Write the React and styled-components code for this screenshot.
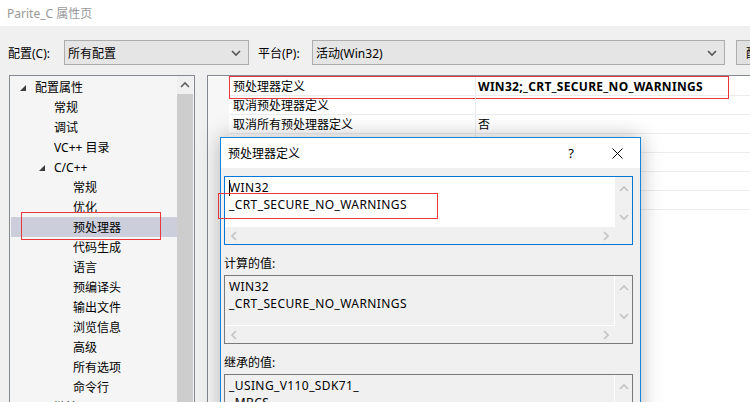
import React from 'react';
import styled, { createGlobalStyle } from 'styled-components';

const GlobalStyle = createGlobalStyle`
  body {
    margin: 0;
    font-family: "Segoe UI", "Noto Sans", "Noto Sans CJK SC", sans-serif;
    font-size: 12px;
    color: #000;
  }
`;

const Window = styled.div`
  position: relative;
  width: 750px;
  height: 402px;
  overflow: hidden;
  background: #f0f0f0;
  display: flex;
  flex-direction: column;
`;

const TitleBar = styled.div`
  height: 26px;
  flex-shrink: 0;
  background: #fff;
  color: #999;
  padding-left: 7px;
  display: flex;
  align-items: center;
`;

const ConfigRow = styled.div`
  display: flex;
  align-items: center;
  height: 25px;
  margin-top: 14px;
  padding-left: 8px;
  flex-shrink: 0;
`;

const FieldLabel = styled.span`
  display: block;
  flex-shrink: 0;
  width: ${p => p.$w}px;
  margin-left: ${p => p.$ml || 0}px;
  white-space: nowrap;
`;

const Latin = styled.span`
  letter-spacing: ${p => (p.$bold ? 0.3 : 0.4)}px;
`;

const Select = styled.div`
  width: ${p => p.$w}px;
  height: 25px;
  box-sizing: border-box;
  border: 1px solid #adadad;
  background: #e5e5e5;
  display: flex;
  align-items: center;
  justify-content: space-between;
  padding: 0 7px 0 3px;
  flex-shrink: 0;
`;

const Button = styled.div`
  margin-left: 11px;
  width: 110px;
  height: 25px;
  box-sizing: border-box;
  border: 1px solid #adadad;
  background: #e1e1e1;
  display: flex;
  align-items: center;
  padding-left: 9px;
  white-space: nowrap;
  flex-shrink: 0;
`;

const Panels = styled.div`
  flex: 1;
  min-height: 0;
  display: flex;
  gap: 12px;
  margin-top: 10px;
  padding-left: 9px;
`;

const Tree = styled.div`
  width: 186px;
  flex-shrink: 0;
  box-sizing: border-box;
  border: 1px solid #828790;
  border-bottom: none;
  background: #f5f5f5;
  display: flex;
  padding-right: 1px;
`;

const TreeList = styled.div`
  flex: 1;
  padding: 1px 0 0 1px;
`;

const TreeRow = styled.div`
  position: relative;
  height: 20px;
  display: flex;
  align-items: center;
  padding-left: ${p => 5 + p.$level * 19}px;
  background: ${p => (p.$selected ? '#cccedb' : 'transparent')};
  white-space: nowrap;
`;

const Caret = styled.span`
  width: 19px;
  flex-shrink: 0;
  display: flex;
  align-items: center;
  padding-left: 4px;
  box-sizing: border-box;
  height: 100%;
  padding-top: 1px;
`;

const VBar = styled.div`
  width: 16px;
  display: flex;
  flex-direction: column;
  background: #f0f0f0;
`;

const BarButton = styled.div`
  height: 18px;
  display: flex;
  align-items: center;
  justify-content: center;
`;

const Thumb = styled.div`
  flex: 1;
  background: #cdcdcd;
`;

const Grid = styled.div`
  flex: 1;
  border-left: 1px solid #828790;
  border-top: 1px solid #828790;
  background: #fff;
  padding-top: 1px;
  display: flex;
  flex-direction: column;
`;

const GridRow = styled.div`
  position: relative;
  display: flex;
  height: 19px;
  flex-shrink: 0;
`;

const Gutter = styled.div`
  width: 21px;
  background: #f7f7f7;
  flex-shrink: 0;
`;

const GridFill = styled.div`
  flex: 1;
  display: flex;
`;

const NameCell = styled.div`
  width: 246px;
  box-sizing: border-box;
  padding-left: 4px;
  border-bottom: 1px solid #ececf0;
  display: flex;
  align-items: center;
  white-space: nowrap;
`;

const ValueCell = styled.div`
  flex: 1;
  box-sizing: border-box;
  padding-left: 2px;
  border-left: 1px solid #ececf0;
  border-bottom: 1px solid #ececf0;
  display: flex;
  align-items: center;
  white-space: nowrap;
  font-weight: ${p => (p.$bold ? 700 : 400)};
`;

const Mark = styled.div`
  position: absolute;
  left: ${p => p.$l}px;
  top: ${p => p.$t}px;
  width: ${p => p.$w}px;
  height: ${p => p.$h}px;
  box-sizing: border-box;
  border: 1px solid #e8383d;
  pointer-events: none;
`;

const Dialog = styled.div`
  position: absolute;
  left: 220px;
  top: 137px;
  width: 421px;
  height: 290px;
  box-sizing: border-box;
  border: 1px solid #1883d7;
  background: #f0f0f0;
  box-shadow: 0 0 20px rgba(0, 0, 0, 0.28);
  display: flex;
  flex-direction: column;
`;

const DialogTitle = styled.div`
  height: 30px;
  flex-shrink: 0;
  background: #fff;
  display: flex;
  align-items: center;
  padding-left: 7px;
`;

const CaptionButton = styled.div`
  width: 46px;
  height: 30px;
  display: flex;
  align-items: center;
  justify-content: center;
  margin-left: ${p => (p.$first ? 'auto' : '0')};
  font-size: 13px;
`;

const DialogBody = styled.div`
  padding: 8px 7px 0 3px;
  display: flex;
  flex-direction: column;
`;

const Field = styled.div`
  position: relative;
`;

const EditBox = styled.div`
  height: 69px;
  box-sizing: border-box;
  border: 1px solid ${p => (p.$active ? '#0078d7' : '#7a7a7a')};
  background: #f0f0f0;
  display: grid;
  grid-template-columns: 1fr 17px;
  grid-template-rows: 1fr 17px;
`;

const TextArea = styled.div`
  position: relative;
  background: ${p => (p.$active ? '#fff' : '#f0f0f0')};
  border-right: 1px solid #fff;
  border-bottom: 1px solid #fff;
  padding: 2px 0 0 4px;
  line-height: 17px;
  white-space: pre;
  overflow: hidden;
  letter-spacing: 0.4px;
`;

const TextCaret = styled.span`
  position: absolute;
  left: 4px;
  top: 3px;
  width: 1px;
  height: 16px;
  background: #000;
`;

const VScroll = styled.div`
  display: flex;
  flex-direction: column;
  justify-content: space-between;
  align-items: center;
  padding: 8px 0 6px;
`;

const HScroll = styled.div`
  display: flex;
  justify-content: space-between;
  align-items: center;
  padding: 0 6px 0 5px;
`;

const SectionLabel = styled.div`
  margin-top: 10px;
  height: 17px;
  line-height: 17px;
  margin-bottom: 3px;
`;

const Chevron = ({ dir, color = '#c2c2c2', size = 8 }) => {
  const paths = {
    up: 'M1 6 L5 2 L9 6',
    down: 'M1 2 L5 6 L9 2',
    left: 'M6 1 L2 5 L6 9',
    right: 'M3 1 L7 5 L3 9',
  };
  const vert = dir === 'up' || dir === 'down';
  return (
    <svg width={vert ? size + 2 : 8} height={vert ? 8 : size + 2} viewBox={vert ? '0 0 10 8' : '0 0 8 10'}>
      <path d={paths[dir]} fill="none" stroke={color} strokeWidth="1.6" />
    </svg>
  );
};

const Expanded = () => (
  <svg width="6" height="6" viewBox="0 0 6 6">
    <polygon points="6,0 6,6 0,6" fill="#3c3c3c" />
  </svg>
);

const treeItems = [
  { text: '配置属性', level: 0, open: true },
  { text: '常规', level: 1 },
  { text: '调试', level: 1 },
  { text: 'VC++ 目录', level: 1 },
  { text: 'C/C++', level: 1, open: true },
  { text: '常规', level: 2 },
  { text: '优化', level: 2 },
  { text: '预处理器', level: 2, selected: true },
  { text: '代码生成', level: 2 },
  { text: '语言', level: 2 },
  { text: '预编译头', level: 2 },
  { text: '输出文件', level: 2 },
  { text: '浏览信息', level: 2 },
  { text: '高级', level: 2 },
  { text: '所有选项', level: 2 },
  { text: '命令行', level: 2 },
  { text: '链接器', level: 1 },
];

const gridRows = [
  { name: '预处理器定义', value: 'WIN32;_CRT_SECURE_NO_WARNINGS', bold: true, marked: true },
  { name: '取消预处理器定义', value: '' },
  { name: '取消所有预处理器定义', value: '否' },
  { name: '', value: '' },
  { name: '', value: '' },
  { name: '', value: '' },
  { name: '', value: '' },
];

const ValueBox = ({ lines, active }) => (
  <EditBox $active={active}>
    <TextArea $active={active}>
      {active && <TextCaret />}
      {lines.join('\n')}
    </TextArea>
    <VScroll>
      <Chevron dir="up" />
      <Chevron dir="down" />
    </VScroll>
    <HScroll>
      <Chevron dir="left" />
      <Chevron dir="right" />
    </HScroll>
    <div />
  </EditBox>
);

const App = () => (
  <Window>
    <GlobalStyle />
    <TitleBar>Parite_C 属性页</TitleBar>
    <ConfigRow>
      <FieldLabel $w={56}>配置(C):</FieldLabel>
      <Select $w={185}>
        所有配置
        <Chevron dir="down" color="#555" />
      </Select>
      <FieldLabel $w={54} $ml={9}>平台(P):</FieldLabel>
      <Select $w={413}>
        活动(Win32)
        <Chevron dir="down" color="#555" />
      </Select>
      <Button>配置管理器(O)...</Button>
    </ConfigRow>
    <Panels>
      <Tree>
        <TreeList>
          {treeItems.map((it, i) => (
            <TreeRow key={i} $level={it.level} $selected={it.selected}>
              <Caret>{it.open && <Expanded />}</Caret>
              {it.text}
              {it.selected && <Mark $l={10} $t={-5} $w={140} $h={28} />}
            </TreeRow>
          ))}
        </TreeList>
        <VBar>
          <BarButton>
            <Chevron dir="up" color="#606060" />
          </BarButton>
          <Thumb />
        </VBar>
      </Tree>
      <Grid>
        {gridRows.map((r, i) => (
          <GridRow key={i}>
            <Gutter />
            <NameCell>{r.name}</NameCell>
            <ValueCell $bold={r.bold}>
              {r.bold ? <Latin $bold>{r.value}</Latin> : r.value}
            </ValueCell>
            {r.marked && <Mark $l={21} $t={-1} $w={500} $h={23} />}
          </GridRow>
        ))}
        <GridFill>
          <Gutter />
        </GridFill>
      </Grid>
    </Panels>

    <Dialog>
      <DialogTitle>
        预处理器定义
        <CaptionButton $first>?</CaptionButton>
        <CaptionButton>
          <svg width="11" height="11" viewBox="0 0 11 11">
            <path d="M0.5 0.5 L10.5 10.5 M10.5 0.5 L0.5 10.5" stroke="#000" strokeWidth="1" />
          </svg>
        </CaptionButton>
      </DialogTitle>
      <DialogBody>
        <Field>
          <ValueBox active lines={['WIN32', '_CRT_SECURE_NO_WARNINGS']} />
          <Mark $l={-6} $t={17} $w={220} $h={26} />
        </Field>
        <SectionLabel>计算的值:</SectionLabel>
        <ValueBox lines={['WIN32', '_CRT_SECURE_NO_WARNINGS']} />
        <SectionLabel>继承的值:</SectionLabel>
        <ValueBox lines={['_USING_V110_SDK71_', '_MBCS']} />
      </DialogBody>
    </Dialog>
  </Window>
);

export default App;
